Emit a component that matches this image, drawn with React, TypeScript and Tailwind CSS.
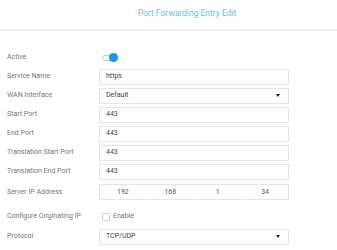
import React from "react";

const Label = ({ children }: { children: React.ReactNode }) => (
  <div className="w-[99px] shrink-0 pl-[7px] text-[7px] text-[#777]">{children}</div>
);

const TextBox = ({ value }: { value: string }) => (
  <div className="flex h-[16px] w-[190px] items-center border border-[#e6e6e6] bg-white pl-[6px] text-[7px] text-[#444]">
    {value}
  </div>
);

const SelectBox = ({ value }: { value: string }) => (
  <div className="flex h-[16px] w-[190px] items-center justify-between border border-[#e6e6e6] bg-white pl-[6px] pr-[8px] text-[7px] text-[#444]">
    <span>{value}</span>
    <svg width="4" height="3" viewBox="0 0 4 3">
      <path d="M0 0 H4 L2 3 Z" fill="#222" />
    </svg>
  </div>
);

export default function App() {
  const ip = ["192", "168", "1", "34"];
  return (
    <div className="h-[250px] w-[337px] bg-white" style={{ fontFamily: "Roboto, 'Liberation Sans', sans-serif" }}>
      <div className="flex h-[31px] items-center justify-center border-b-2 border-[#f2f2f2] pl-[37px] pb-[3px] text-[8.5px] text-[#62c6db]">
        Port Forwarding Entry Edit
      </div>
      <div className="flex flex-col pt-[17px]">
        <div className="flex h-[19px] items-center">
          <Label>Active</Label>
          <div className="relative ml-[3px] h-[9px] w-[16px]">
            <div className="absolute left-0 top-[1.5px] h-[6px] w-[14px] rounded-full border border-[#9fd3f7] bg-white" />
            <div className="absolute right-0 top-0 h-[9px] w-[9px] rounded-full bg-[#1497f5]" />
          </div>
        </div>
        <div className="flex h-[19px] items-center">
          <Label>Service Name</Label>
          <TextBox value="https" />
        </div>
        <div className="flex h-[19px] items-center">
          <Label>WAN Interface</Label>
          <SelectBox value="Default" />
        </div>
        <div className="flex h-[19px] items-center">
          <Label>Start Port</Label>
          <TextBox value="443" />
        </div>
        <div className="flex h-[19px] items-center">
          <Label>End Port</Label>
          <TextBox value="443" />
        </div>
        <div className="flex h-[19px] items-center">
          <Label>Translation Start Port</Label>
          <TextBox value="443" />
        </div>
        <div className="flex h-[19px] items-center">
          <Label>Translation End Port</Label>
          <TextBox value="443" />
        </div>
        <div className="mt-[1px] flex h-[20px] items-center">
          <Label>Server IP Address</Label>
          <div className="flex h-[16px] w-[190px] items-center border border-[#e6e6e6] bg-white text-[7px] text-[#555]">
            {ip.map((v, i) => (
              <React.Fragment key={i}>
                <div className="flex-1 text-center">{v}</div>
                {i < 3 && <div className="self-end pb-[1px] text-[6px] leading-none text-[#999]">.</div>}
              </React.Fragment>
            ))}
          </div>
        </div>
        <div className="mt-[5px] flex h-[19px] items-center">
          <Label>Configure Originating IP</Label>
          <div className="ml-[3px] flex items-center gap-[3px] text-[7px] text-[#777]">
            <div className="h-[8px] w-[8px] rounded-[1px] border border-[#d2d2d2] bg-white" />
            <span>Enable</span>
          </div>
        </div>
        <div className="mt-[1px] flex h-[19px] items-center">
          <Label>Protocol</Label>
          <SelectBox value="TCP/UDP" />
        </div>
      </div>
    </div>
  );
}
